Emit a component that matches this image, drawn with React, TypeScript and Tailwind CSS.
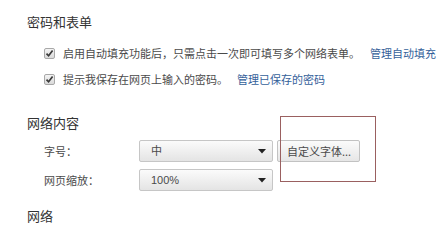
import React from "react";

function Check() {
  return (
    <span className="w-[11px] h-[11px] shrink-0 border border-[#a8a8a8] rounded-[2px] bg-gradient-to-b from-[#f4f4f4] to-[#dadada] flex items-center justify-center">
      <svg width="9" height="9" viewBox="0 0 9 9">
        <path d="M1.5 4.6 L3.6 6.8 L7.6 1.6" fill="none" stroke="#3a3a3a" strokeWidth="1.7" />
      </svg>
    </span>
  );
}

function Select({ value }: { value: string }) {
  return (
    <div className="w-[134px] h-[22px] border border-[#c6c6c6] rounded-[2px] bg-gradient-to-b from-[#fbfbfb] to-[#e4e4e4] flex items-center justify-between pl-[11px] pr-[6px]">
      <span className="text-[11px] text-[#4a4a4a] font-['Liberation_Sans','Noto_Sans_CJK_SC',sans-serif]">{value}</span>
      <svg width="8" height="5" viewBox="0 0 8 5">
        <path d="M0 0 H8 L4 4.5 Z" fill="#222" />
      </svg>
    </div>
  );
}

export default function App() {
  return (
    <div className="w-[436px] h-[228px] bg-white overflow-hidden relative font-['Noto_Sans_CJK_SC',sans-serif] text-[11px] text-[#4a4a4a]">
      <div className="pl-[27px] pt-[14px] flex flex-col">
        <h2 className="text-[13px] leading-[16px] text-[#333]">密码和表单</h2>
        <div className="mt-[15px] pl-[17px] flex flex-col gap-[10px]">
          <div className="h-[16px] flex items-center gap-[8px] whitespace-nowrap">
            <Check />
            <span className="leading-[16px]">启用自动填充功能后，只需点击一次即可填写多个网络表单。</span>
            <span className="leading-[16px] text-[#34619a] ml-[2px]">管理自动填充</span>
          </div>
          <div className="h-[16px] flex items-center gap-[8px] whitespace-nowrap">
            <Check />
            <span className="leading-[16px]">提示我保存在网页上输入的密码。</span>
            <span className="leading-[16px] text-[#34619a] ml-[1px]">管理已保存的密码</span>
          </div>
        </div>
        <h2 className="mt-[28px] text-[13px] leading-[16px] text-[#333]">网络内容</h2>
        <div className="mt-[9px] pl-[17px] flex flex-col gap-[7px]">
          <div className="h-[22px] flex items-center">
            <span className="w-[95px]">字号：</span>
            <Select value="中" />
            <button className="ml-[4px] w-[83px] h-[22px] border border-[#c2c2c2] rounded-[2px] bg-gradient-to-b from-[#fbfbfb] to-[#e6e6e6] text-left pl-[9px] text-[11px] text-[#4a4a4a] whitespace-nowrap">
              自定义字体...
            </button>
          </div>
          <div className="h-[22px] flex items-center">
            <span className="w-[95px]">网页缩放：</span>
            <Select value="100%" />
          </div>
        </div>
        <h2 className="mt-[17px] text-[13px] leading-[16px] text-[#333]">网络</h2>
      </div>
      <div className="absolute left-[280px] top-[116px] w-[96px] h-[66px] border-[1.5px] border-[#9a6060]" />
    </div>
  );
}
